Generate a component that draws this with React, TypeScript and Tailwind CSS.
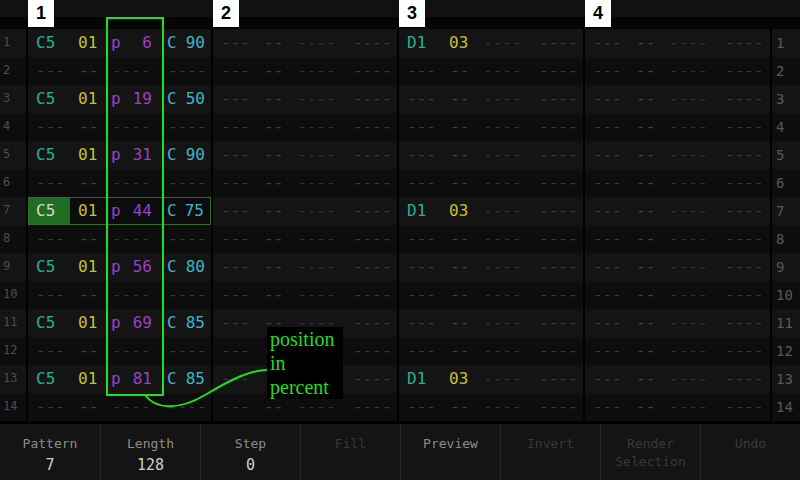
import React from "react";

// pattern data for track 1 (odd rows only), track 3 (rows 1, 7, 13)
const positions = [6, 19, 31, 44, 56, 69, 81];
const cValues = [90, 50, 90, 75, 80, 85, 85];
const rows = Array.from({ length: 14 }, (_, i) => i + 1);

const buttons = [
  { label: "Pattern", value: "7", tone: "on" },
  { label: "Length", value: "128", tone: "on" },
  { label: "Step", value: "0", tone: "on" },
  { label: "Fill", tone: "off" },
  { label: "Preview", tone: "on" },
  { label: "Invert", tone: "off" },
  { label: "Render Selection", tone: "off" },
  { label: "Undo", tone: "off" },
];

function EmptyStep() {
  return (
    <div className="flex h-full items-center">
      <span className="w-[42px] pl-[8px] text-[#1c4a44]">---</span>
      <span className="w-[35px] pl-[9px] text-[#4a4520]">--</span>
      <span className="w-[57px] pl-[7px] text-[#3a2c4a]">----</span>
      <span className="flex-1 pl-[6px] text-[#1d4550]">----</span>
    </div>
  );
}

function NoteStep({ note, inst, pos, c, active }: { note: string; inst: string; pos?: number; c?: number; active?: boolean }) {
  return (
    <div className={`flex h-full items-center ${active ? "border border-[#2b6e2b] bg-[#0c0c0c]" : ""}`}>
      <span className={`flex h-full w-[42px] items-center pl-[8px] ${active ? "-ml-px bg-[#226b22] text-[#cfdccf]" : "text-[#1eb596]"}`}>{note}</span>
      <span className="w-[35px] pl-[8px] text-[#c9c12c]">{inst}</span>
      {pos !== undefined ? (
        <span className="flex w-[57px] justify-between pl-[6px] pr-[10px] text-[#9a42c4]">
          <span>p</span>
          <span>{pos}</span>
        </span>
      ) : (
        <span className="w-[57px] pl-[7px] text-[#3a2c4a]">----</span>
      )}
      {c !== undefined ? (
        <span className="flex flex-1 justify-between pl-[5px] pr-[6px] text-[#3fb6c6]">
          <span>C</span>
          <span>{c}</span>
        </span>
      ) : (
        <span className="flex-1 pl-[6px] text-[#1d4550]">----</span>
      )}
    </div>
  );
}

function TrackLabel({ n, w }: { n: number; w: string }) {
  return (
    <div className={`${w} h-full`}>
      <div className="flex h-[27px] w-[26px] items-center justify-center bg-white font-['Liberation_Sans',sans-serif] text-[18px] font-bold text-black">
        {n}
      </div>
    </div>
  );
}

export default function App() {
  return (
    <div className="relative flex h-[480px] w-[800px] flex-col overflow-hidden bg-black font-['DejaVu_Sans_Mono',monospace] text-[16px]">
      {/* header */}
      <div className="flex h-[29px] shrink-0 gap-[2px] bg-[linear-gradient(#111111_0_17px,#050505_17px)]">
        <div className="w-[26px]" />
        <TrackLabel n={1} w="w-[183px]" />
        <TrackLabel n={2} w="w-[184px]" />
        <TrackLabel n={3} w="w-[184px]" />
        <TrackLabel n={4} w="w-[185px]" />
        <div className="w-[28px]" />
      </div>

      {/* step rows */}
      <div className="flex flex-col">
        {rows.map((r) => {
          const odd = r % 2 === 1;
          const idx = (r - 1) / 2;
          const bg = odd ? "bg-[#141414]" : "bg-[#0d0d0d]";
          const t3 = r === 1 || r === 7 || r === 13;
          return (
            <div key={r} className="flex h-[28px] gap-[2px] bg-black">
              <div className={`w-[26px] pl-[3px] pt-[7px] text-[12px] leading-none text-[#4d4d4d] ${bg}`}>{r}</div>
              <div className={`w-[183px] ${bg}`}>
                {odd ? <NoteStep note="C5" inst="01" pos={positions[idx]} c={cValues[idx]} active={r === 7} /> : <EmptyStep />}
              </div>
              <div className={`w-[184px] ${bg}`}>
                <EmptyStep />
              </div>
              <div className={`w-[184px] ${bg}`}>
                {t3 ? <NoteStep note="D1" inst="03" /> : <EmptyStep />}
              </div>
              <div className={`w-[185px] ${bg}`}>
                <EmptyStep />
              </div>
              <div className={`w-[28px] pl-[4px] pt-[7px] text-[14px] leading-none text-[#5a5a5a] ${bg}`}>{r}</div>
            </div>
          );
        })}
      </div>

      {/* bottom buttons */}
      <div className="mt-[3px] flex flex-1 bg-[#141414]">
        {buttons.map((b, i) => (
          <div key={b.label} className={`flex w-[100px] flex-col items-center pt-[11px] ${i > 0 ? "border-l border-[#262626]" : ""}`}>
            <div
              className={`text-center text-[13px] leading-[18px] ${b.tone === "on" ? "text-[#8c8c8c]" : "text-[#3a3a3a]"} ${b.label === "Render Selection" ? "w-[80px]" : ""}`}
            >
              {b.label}
            </div>
            {b.value && <div className="mt-[3px] text-[15px] leading-[18px] text-[#d0d0d0]">{b.value}</div>}
          </div>
        ))}
      </div>

      {/* annotation overlay */}
      <div className="absolute left-[106px] top-[17px] h-[379px] w-[58px] border-2 border-[#1fe01f]" />
      <svg className="absolute left-0 top-0" width="800" height="480" viewBox="0 0 800 480">
        <path d="M145 395 C 155 409, 178 411, 205 395 S 250 370, 267 370" fill="none" stroke="#1fe01f" strokeWidth="2" />
      </svg>
      <div className="absolute left-[267px] top-[327px] w-[76px] bg-black pl-[3px] font-['Liberation_Serif',serif] text-[20px] leading-[24px] text-[#22dd22]">
        position
        <br />
        in
        <br />
        percent
      </div>
    </div>
  );
}
